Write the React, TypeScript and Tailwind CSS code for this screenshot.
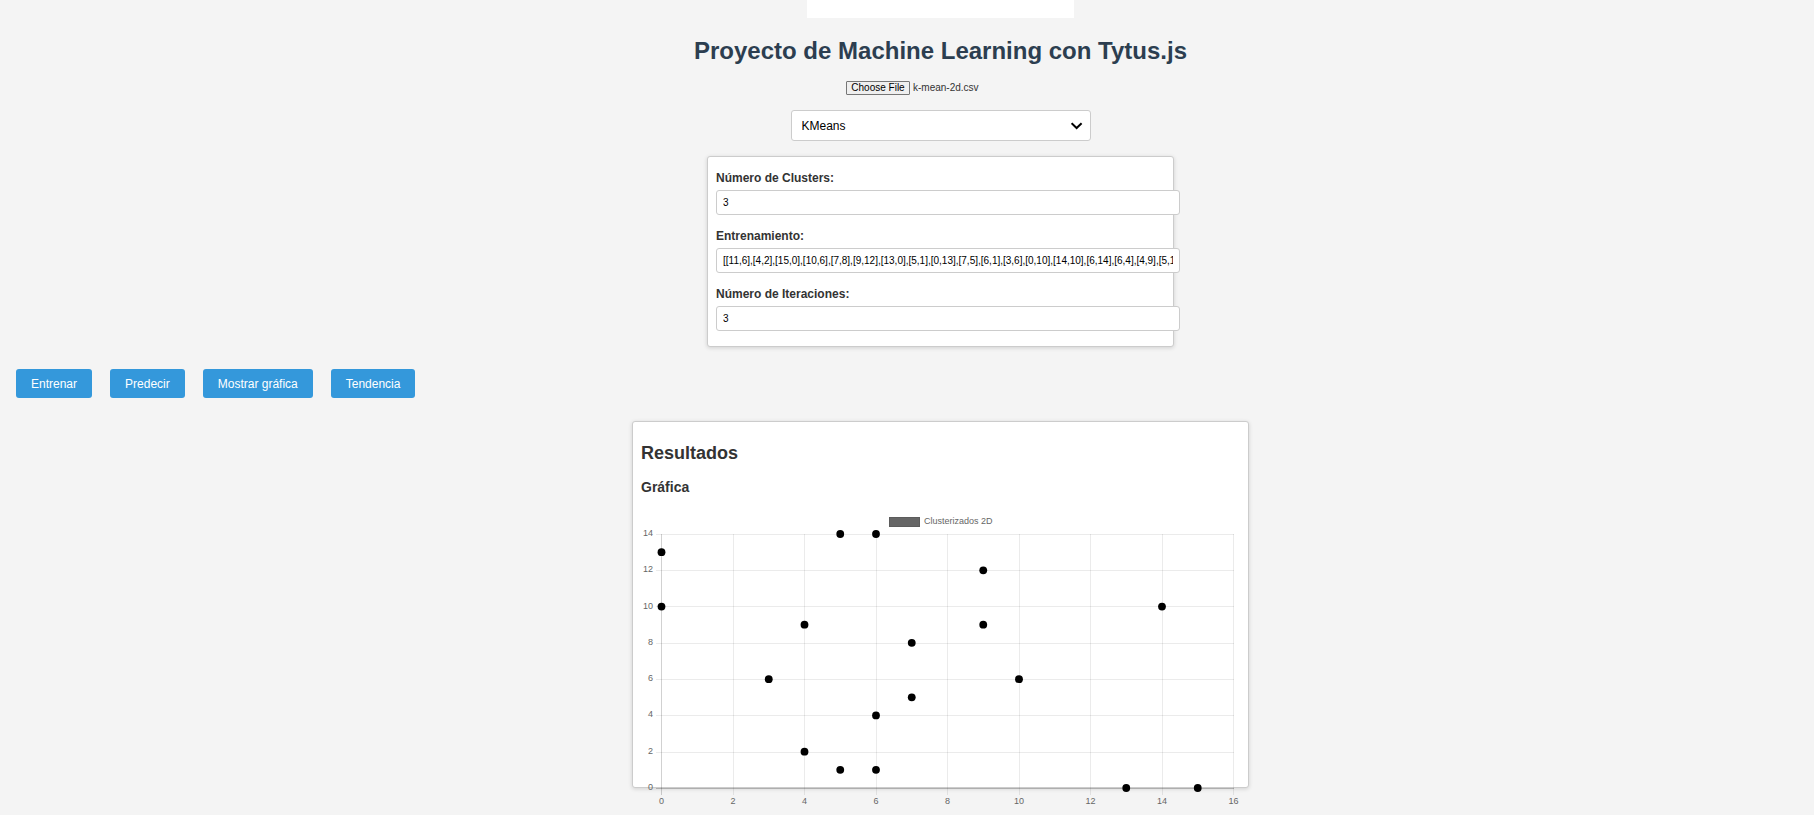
import { useRef, useState } from "react";

type Point = [number, number];

const points: Point[] = [
  [11, 6], [4, 2], [15, 0], [10, 6], [7, 8], [9, 12], [13, 0], [5, 1], [0, 13],
  [7, 5], [6, 1], [3, 6], [0, 10], [14, 10], [6, 14], [6, 4], [4, 9], [5, 14], [9, 9],
];

const plotted = points.slice(1);

const xTicks = [0, 2, 4, 6, 8, 10, 12, 14, 16];
const yTicks = [0, 2, 4, 6, 8, 10, 12, 14];

const PLOT = { left: 20, right: 592, top: 27, bottom: 281 };
const scaleX = (v: number) => PLOT.left + (v / 16) * (PLOT.right - PLOT.left);
const scaleY = (v: number) => PLOT.bottom - (v / 14) * (PLOT.bottom - PLOT.top);
const crispX = (v: number) => Math.round(v) + 0.5;
const crispY = (v: number) => Math.floor(v + 0.35) + 0.5;

function ScatterChart() {
  return (
    <svg
      viewBox="0 0 599 300"
      className="block h-[300px] w-[599px] max-w-none shrink-0 overflow-visible"
      role="img"
      aria-label="Clusterizados 2D"
    >
      {xTicks.map((t) => (
        <line
          key={t}
          x1={crispX(scaleX(t))}
          x2={crispX(scaleX(t))}
          y1={PLOT.top}
          y2={PLOT.bottom + 7}
          stroke="#000"
          strokeOpacity={t === 0 ? 0.18 : 0.08}
        />
      ))}
      {yTicks.map((t) => (
        <line
          key={t}
          x1={PLOT.left - 5}
          x2={PLOT.right + 1}
          y1={crispY(scaleY(t))}
          y2={crispY(scaleY(t))}
          stroke="#000"
          strokeOpacity={t === 0 ? 0.22 : 0.08}
        />
      ))}
      <g className="fill-[#666666] text-[9px]">
        {xTicks.map((t) => (
          <text key={t} x={scaleX(t) + 0.5} y={297} textAnchor="middle">{t}</text>
        ))}
        {yTicks.map((t) => (
          <text key={t} x={12} y={scaleY(t) + 2} textAnchor="end">{t}</text>
        ))}
        <text x={283} y={17}>Clusterizados 2D</text>
      </g>
      <rect x={248.5} y={10.5} width={30} height={9} fill="#666" stroke="#5c5c5c" />
      {plotted.map(([x, y]) => (
        <circle key={`${x}-${y}`} cx={scaleX(x) + 0.5} cy={scaleY(y)} r={3.9} />
      ))}
    </svg>
  );
}

function Field({ id, label, initial }: { id: string; label: string; initial: string }) {
  const [value, setValue] = useState(initial);
  return (
    <div className="mb-2 pt-[7px]">
      <label htmlFor={id} className="mb-[5px] block text-xs leading-[13px] font-bold">{label}</label>
      <input
        id={id}
        type="text"
        value={value}
        onChange={(e) => setValue(e.target.value)}
        className="block h-[25px] w-[464px] rounded-[3px] border border-[#cccccc] bg-white px-[6px] text-[10px] text-black"
      />
    </div>
  );
}

function FilePicker() {
  const input = useRef<HTMLInputElement>(null);
  const [name, setName] = useState("k-mean-2d.csv");
  return (
    <div className="mt-[15px] flex w-[189px] items-center gap-[3px] text-[10px]">
      <input
        ref={input}
        type="file"
        aria-label="Archivo CSV"
        className="hidden"
        onChange={(e) => setName(e.target.files?.[0]?.name ?? name)}
      />
      <button
        type="button"
        onClick={() => input.current?.click()}
        className="h-[14px] w-16 rounded-[1px] border border-[#767676] bg-[#efefef] leading-[12px] whitespace-nowrap text-black"
      >
        Choose File
      </button>
      <span className="leading-[14px] whitespace-nowrap">{name}</span>
    </div>
  );
}

const actions = ["Entrenar", "Predecir", "Mostrar gráfica", "Tendencia"];

export default function App() {
  return (
    <div className="min-h-screen bg-[#f4f4f4] font-['Liberation_Sans',Arial,sans-serif] text-[#333333]">
      <header className="flex flex-col items-center pl-[67px]">
        <div className="h-[18px] w-[267px] bg-white" />
        <h1 className="mt-[18px] text-2xl leading-[30px] font-bold whitespace-nowrap text-[#2c3e50]">
          Proyecto de Machine Learning con Tytus.js
        </h1>
        <FilePicker />
        <div className="mt-[15px] grid w-[300px] items-center">
          <select
            aria-label="Modelo"
            defaultValue="KMeans"
            className="col-start-1 row-start-1 h-[31px] appearance-none rounded-[3px] border border-[#cccccc] bg-white px-[10px] text-xs text-black"
          >
            <option>KMeans</option>
          </select>
          <svg
            viewBox="0 0 12 8"
            className="pointer-events-none col-start-1 row-start-1 mr-2 h-2 w-3 justify-self-end"
            aria-hidden="true"
          >
            <path d="M.6 1.2 5.6 6 10.6 1.2" fill="none" stroke="#000" strokeWidth="2" />
          </svg>
        </div>
      </header>

      <main>
        <div className="flex justify-center pl-[67px]">
          <form className="mt-[15px] w-[467px] rounded-[3px] border border-[#cccccc] bg-white px-2 pt-2 pb-[7px] shadow-[0_1px_4px_rgba(0,0,0,0.15)]">
            <Field id="clusters" label="Número de Clusters:" initial="3" />
            <Field id="train" label="Entrenamiento:" initial={JSON.stringify(points)} />
            <Field id="iterations" label="Número de Iteraciones:" initial="3" />
          </form>
        </div>

        <div className="mt-[22px] flex gap-[18px] px-4">
          {actions.map((action) => (
            <button
              key={action}
              type="button"
              className="h-[29px] rounded-[3px] bg-[#3498db] px-[15px] text-xs whitespace-nowrap text-white"
            >
              {action}
            </button>
          ))}
        </div>

        <div className="flex justify-center pl-[67px]">
          <section className="mt-[23px] h-[367px] w-[617px] rounded-[3px] border border-[#cccccc] bg-white px-2 shadow-[0_1px_4px_rgba(0,0,0,0.15)]">
            <h2 className="mt-[21px] text-lg leading-5 font-bold">Resultados</h2>
            <h3 className="mt-4 mb-3 text-sm leading-4 font-bold">Gráfica</h3>
            <ScatterChart />
          </section>
        </div>
      </main>
    </div>
  );
}
